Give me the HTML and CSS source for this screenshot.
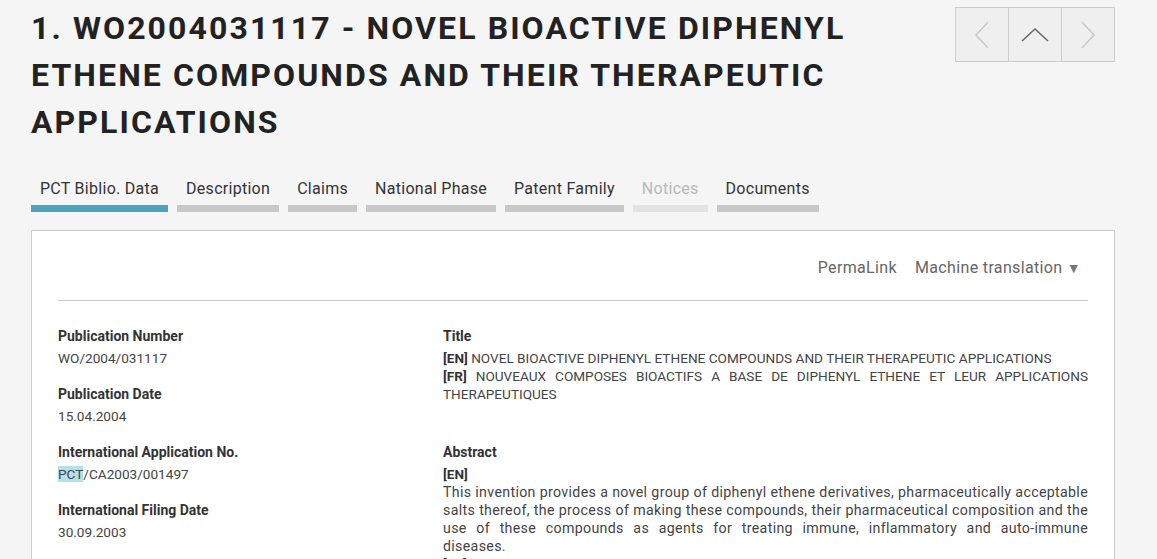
FILE: index.html
```html
<!DOCTYPE html>
<html lang="en">
<head>
	<meta charset="utf-8"/>
	<title>WO2004031117 - Novel bioactive diphenyl ethene compounds</title>
	<link rel="stylesheet" href="styles.css">
</head>
<body>

<div id="header">
	<h1>1. WO2004031117 - NOVEL BIOACTIVE DIPHENYL ETHENE COMPOUNDS AND THEIR THERAPEUTIC APPLICATIONS</h1>
	<div class="pager">
		<a class="prev" href="#"><svg width="20" height="30" viewBox="0 0 20 30"><path d="M16 2 L4 15 L16 28" fill="none" stroke="#c8c8c8" stroke-width="1.5"/></svg></a>
		<a class="up" href="#"><svg width="30" height="20" viewBox="0 0 30 20"><path d="M2 16 L15 4 L28 16" fill="none" stroke="#666" stroke-width="1.5"/></svg></a>
		<a class="next" href="#"><svg width="20" height="30" viewBox="0 0 20 30"><path d="M4 2 L16 15 L4 28" fill="none" stroke="#c8c8c8" stroke-width="1.5"/></svg></a>
	</div>
</div>

<ul id="tabs">
	<li class="active">PCT Biblio. Data</li>
	<li>Description</li>
	<li>Claims</li>
	<li>National Phase</li>
	<li>Patent Family</li>
	<li class="disabled">Notices</li>
	<li>Documents</li>
</ul>

<div id="main">
	<div class="toolbar">
		<a href="#">PermaLink</a>
		<a href="#">Machine translation <span class="caret">&#9660;</span></a>
	</div>

	<div class="biblio">
		<div class="left">
			<div class="field">
				<h3>Publication Number</h3>
				<p>WO/2004/031117</p>
			</div>
			<div class="field">
				<h3>Publication Date</h3>
				<p>15.04.2004</p>
			</div>
			<div class="field">
				<h3>International Application No.</h3>
				<p><span class="sel">PCT</span>/CA2003/001497</p>
			</div>
			<div class="field">
				<h3>International Filing Date</h3>
				<p>30.09.2003</p>
			</div>
		</div>

		<div class="right">
			<div class="field">
				<h3>Title</h3>
				<p><b>[EN]</b> NOVEL BIOACTIVE DIPHENYL ETHENE COMPOUNDS AND THEIR THERAPEUTIC APPLICATIONS</p>
				<p><b>[FR]</b> NOUVEAUX COMPOSES BIOACTIFS A BASE DE DIPHENYL ETHENE ET LEUR APPLICATIONS THERAPEUTIQUES</p>
			</div>
			<div class="field">
				<h3>Abstract</h3>
				<p><b>[EN]</b></p>
				<p class="abstract">This invention provides a novel group of diphenyl ethene derivatives, pharmaceutically acceptable salts thereof, the process of making these compounds, their pharmaceutical composition and the use of these compounds as agents for treating immune, inflammatory and auto-immune diseases.</p>
				<p><b>[FR]</b></p>
			</div>
		</div>
	</div>
</div>
</body>
</html>
```

FILE: styles.css
```css
body {
	background: #f5f5f5;
	color: #333;
	font: 14px Roboto, 'Liberation Sans', arial, sans-serif;
	margin: 0;
	padding: 0 42px 0 31px;
	overflow: hidden;
}

#header {
	display: flex;
	justify-content: space-between;
	align-items: flex-start;
}

h1 {
	font-size: 32px;
	font-weight: bold;
	letter-spacing: 2.1px;
	line-height: 47px;
	color: #222;
	margin: 5px 0 0 0;
	width: 880px;
}

.pager {
	display: flex;
	margin-top: 7px;
	border: 1px solid #ccc;
	background: #efefef;
}

.pager a {
	width: 52px;
	height: 53px;
	display: flex;
	align-items: center;
	justify-content: center;
	border-left: 1px solid #ccc;
}

.pager a:first-child {
	border-left: none;
}

#tabs {
	list-style: none;
	margin: 33px 0 0 0;
	padding: 0;
	display: flex;
	gap: 9px;
}

#tabs li {
	font-size: 16px;
	letter-spacing: 0.28px;
	color: #333;
	padding: 0 9px 6px;
	border-bottom: 7px solid #c8c8c8;
	line-height: 20px;
}

#tabs li.active {
	border-bottom-color: #4ba3bf;
}

#tabs li.disabled {
	color: #b8b8b8;
	border-bottom-color: #e3e3e3;
}

#main {
	background: #fff;
	border: 1px solid #ccc;
	margin-top: 18px;
	padding: 0 26px;
	height: 400px;
}

.toolbar {
	display: flex;
	justify-content: flex-end;
	gap: 18px;
	padding: 27px 7px 0 0;
	border-bottom: 1px solid #ccc;
	box-sizing: border-box;
	height: 70px;
}

.toolbar a {
	font-size: 16px;
	letter-spacing: 0.35px;
	color: #666;
	text-decoration: none;
	line-height: 20px;
}

.caret {
	font-size: 14px;
	color: #777;
}

.biblio {
	display: flex;
	padding-top: 26px;
}

.left {
	width: 385px;
	flex: none;
}

.right {
	flex: 1;
}

.field {
	margin-bottom: 18px;
}

.right .field {
	margin-bottom: 40px;
}

h3 {
	font-size: 14px;
	font-weight: bold;
	color: #333;
	margin: 0;
	line-height: 18px;
}

.field p {
	margin: 0;
	font-size: 13.6px;
	color: #444;
	line-height: 18px;
	text-align: justify;
}

.field p.abstract {
	font-size: 14.2px;
	letter-spacing: 0.33px;
}

.left .field p {
	margin-top: 4px;
}

.right .field h3 {
	margin-bottom: 4px;
}

.field p b {
	color: #333;
}

.sel {
	background: #b4e0ee;
}
```
